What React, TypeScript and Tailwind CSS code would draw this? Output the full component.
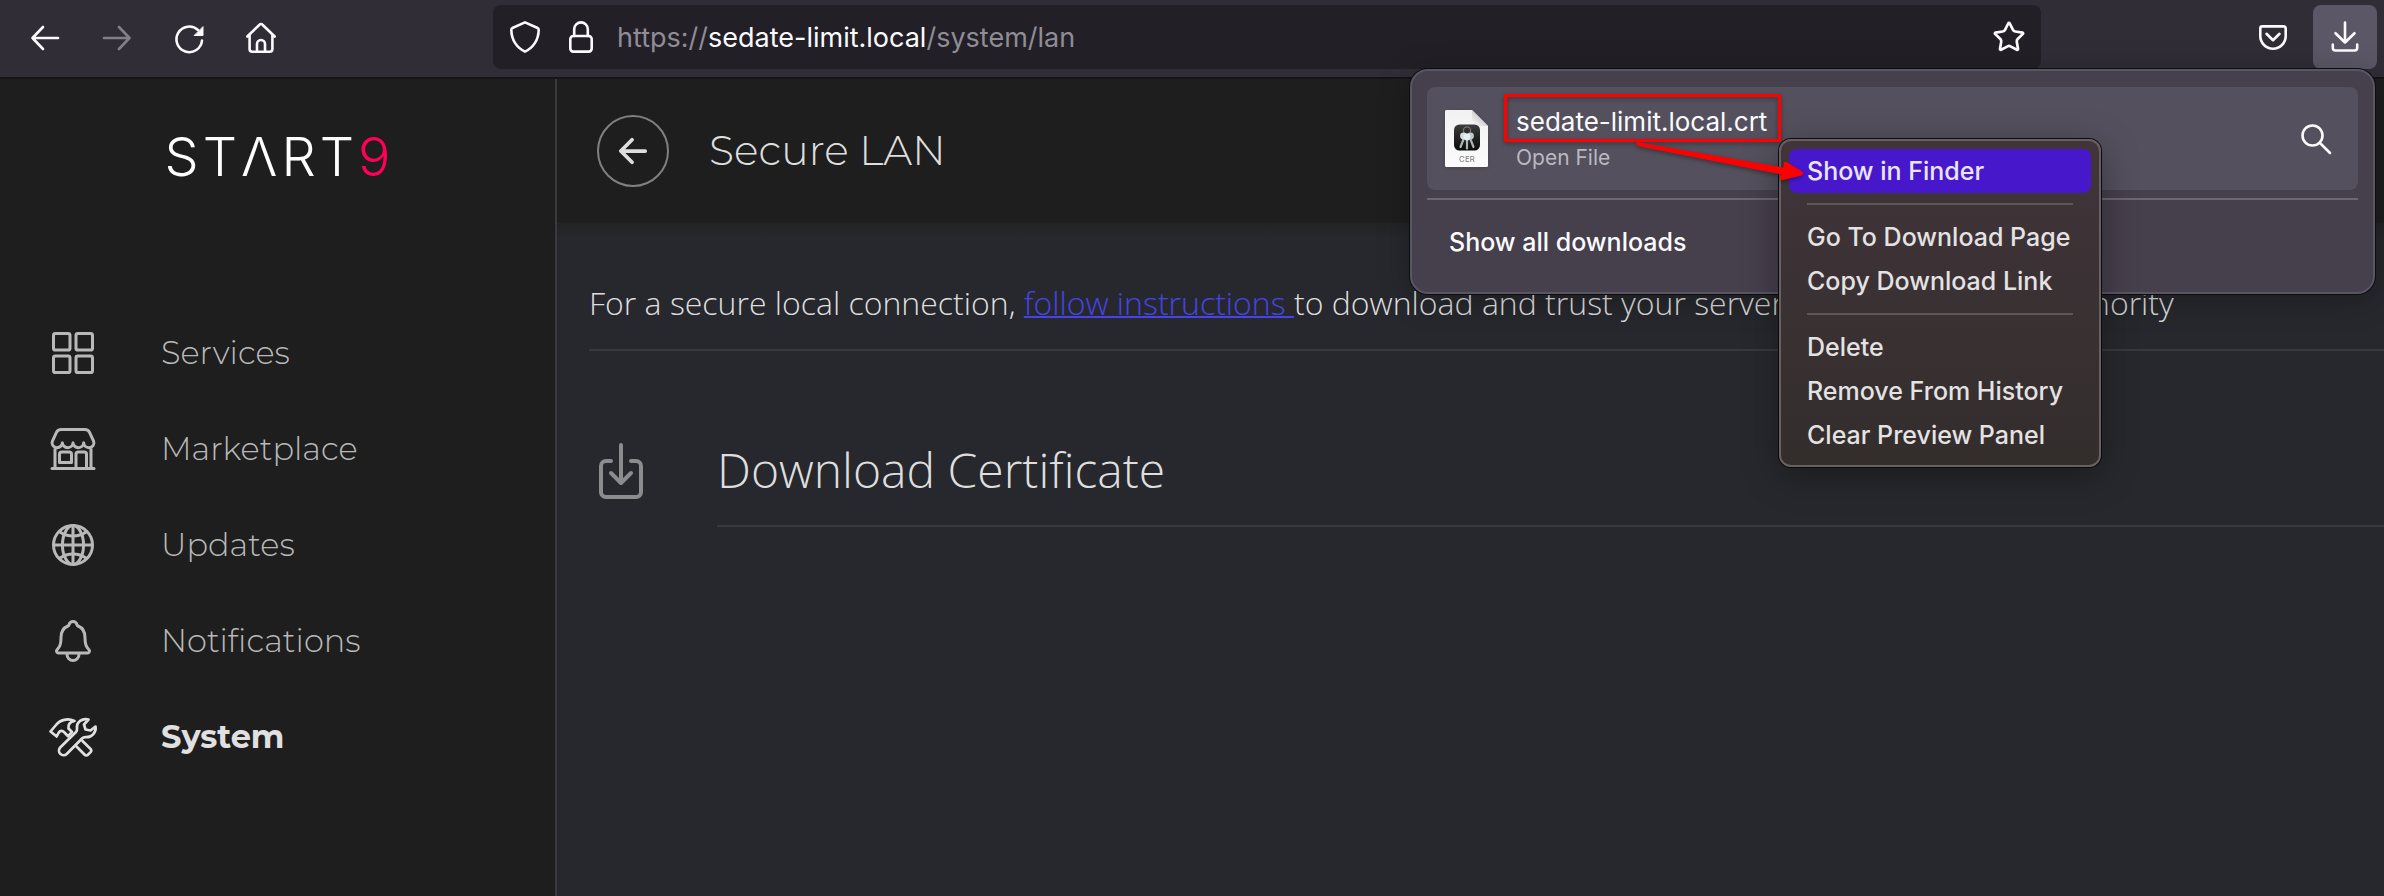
import { useState } from "react";
import type { ReactNode } from "react";
import {
  IoArrowBack,
  IoDownloadOutline,
  IoGlobeOutline,
  IoGridOutline,
  IoNotificationsOutline,
  IoStorefrontOutline,
} from "react-icons/io5";
import { Star } from "lucide-react";

function Glyph({ children }: { children: ReactNode }) {
  return (
    <svg
      viewBox="0 0 36 36"
      className="size-9"
      fill="none"
      stroke="currentColor"
      strokeWidth="2.6"
      strokeLinecap="round"
      strokeLinejoin="round"
      aria-hidden="true"
    >
      {children}
    </svg>
  );
}

function ToolButton({ label, className = "", children }: { label: string; className?: string; children: ReactNode }) {
  return (
    <button
      type="button"
      aria-label={label}
      className={`flex size-16 shrink-0 items-center justify-center rounded-lg text-[#fbfbfe] ${className}`}
    >
      {children}
    </button>
  );
}

function AddressBar() {
  const [url, setUrl] = useState("https://sedate-limit.local/system/lan");
  const parts = url.match(/^(\w+:\/\/)?([^/]*)(.*)$/) ?? ["", "", url, ""];
  return (
    <div className="mx-[200px] flex h-16 min-w-0 flex-1 items-center rounded-lg bg-[#221f26] px-1 text-[#fbfbfe]">
      <button type="button" aria-label="Tracking protection" className="flex h-16 w-14 items-center justify-center">
        <Glyph>
          <path d="M18 3.4 30.6 9c.7.3 1.1.9 1.1 1.7C31.6 21 26 29 18 32.6 10 29 4.4 21 4.3 10.7c0-.8.4-1.4 1.1-1.7z" />
        </Glyph>
      </button>
      <button type="button" aria-label="Site information" className="flex h-16 w-14 items-center justify-center">
        <Glyph>
          <rect x="7.3" y="17" width="21.4" height="15.6" rx="3" />
          <path d="M11.200 17v-6.800a6.800 6.800 0 0 1 13.600 0V17" />
        </Glyph>
      </button>
      <div className="relative ml-2 flex-1 pt-0.5 text-[27px] leading-9">
        <div aria-hidden="true" className="whitespace-pre text-[#8f8d95]">
          {parts[1]}
          <span className="text-[#fbfbfe]">{parts[2]}</span>
          {parts[3]}
        </div>
        <input
          aria-label="Address"
          value={url}
          onChange={(e) => setUrl(e.target.value)}
          className="absolute inset-0 w-full bg-transparent text-transparent caret-white outline-none"
        />
      </div>
      <button type="button" aria-label="Bookmark this page" className="flex h-16 w-14 items-center justify-center">
        <Star className="size-[34px]" strokeWidth={1.9} aria-hidden="true" />
      </button>
    </div>
  );
}

function FileIcon() {
  return (
    <svg viewBox="0 0 43 57" className="h-[57px] w-[43px] shrink-0 drop-shadow-sm" aria-hidden="true">
      <defs>
        <linearGradient id="sheet" x1="0" y1="0" x2="0" y2="1">
          <stop offset="0" stopColor="#f2f2f2" />
          <stop offset="1" stopColor="#fbfbfb" />
        </linearGradient>
        <linearGradient id="fold" x1="0" y1="1" x2="1" y2="0">
          <stop offset="0" stopColor="#fff" />
          <stop offset="0.5" stopColor="#d2d2d2" />
          <stop offset="1" stopColor="#eee" />
        </linearGradient>
        <linearGradient id="tile" x1="0" y1="0" x2="0" y2="1">
          <stop offset="0" stopColor="#3c3c3c" />
          <stop offset="1" stopColor="#0a0a0a" />
        </linearGradient>
      </defs>
      <path d="M1.500 0H27L43 16v39.500a1.500 1.500 0 0 1-1.500 1.500h-40A1.500 1.500 0 0 1 0 55.500v-54A1.500 1.500 0 0 1 1.500 0z" fill="url(#sheet)" />
      <path d="M27 0v14.500a1.500 1.500 0 0 0 1.500 1.500H43z" fill="url(#fold)" />
      <rect x="9" y="14.5" width="26" height="26" rx="5.5" fill="url(#tile)" />
      <circle cx="22" cy="20.5" r="3.6" fill="none" stroke="#77756a" strokeWidth="1.2" />
      <g stroke="#aab4b6" strokeWidth="2.2" strokeLinecap="round">
        <path d="M19 28 15.500 37M22 29v9.500M25 28l3.500 9" />
      </g>
      <circle cx="18.5" cy="26" r="3.4" fill="#d3e0e2" />
      <circle cx="25.5" cy="26" r="3.4" fill="#bccbce" />
      <circle cx="22" cy="27" r="3.4" fill="#e6efef" />
      <text x="22" y="51.5" textAnchor="middle" fontSize="8" fill="#777" className="font-['Inter',sans-serif]">
        CER
      </text>
    </svg>
  );
}

function MenuItem({ children, active = false }: { children: ReactNode; active?: boolean }) {
  return (
    <button
      type="button"
      role="menuitem"
      className={`block h-11 w-full rounded-lg px-[18px] text-left text-[25px] leading-[44px] font-medium whitespace-nowrap ${
        active ? "bg-[#4718cb] text-[#eae6fa]" : "text-[#e4e2e2]"
      }`}
    >
      {children}
    </button>
  );
}

function MenuRule() {
  return <hr className="mx-[18px] my-2.5 border-0 border-t-2 border-[#5d5756]" />;
}

function ContextMenu() {
  return (
    <div
      role="menu"
      className="absolute top-[68px] left-[367px] w-[322px] rounded-xl border-2 border-[#666060] bg-linear-to-b from-[#41353b] to-[#332d2c] p-2 shadow-[0_0_0_1px_#0c0b0d,0_8px_36px_rgba(0,0,0,0.35)]"
    >
      <MenuItem active>Show in Finder</MenuItem>
      <MenuRule />
      <MenuItem>Go To Download Page</MenuItem>
      <MenuItem>Copy Download Link</MenuItem>
      <MenuRule />
      <MenuItem>Delete</MenuItem>
      <MenuItem>Remove From History</MenuItem>
      <MenuItem>Clear Preview Panel</MenuItem>
    </div>
  );
}

function Callout() {
  return (
    <svg
      viewBox="0 0 310 100"
      className="pointer-events-none absolute top-[19px] left-[88px] h-[100px] w-[310px] drop-shadow-[0_2px_2px_rgba(0,0,0,0.35)]"
      aria-hidden="true"
    >
      <rect x="5.5" y="5.5" width="274" height="45" rx="0.5" fill="none" stroke="#ff0000" strokeWidth="3.2" />
      <path
        d="M137 52 283.500 77.500 283.500 73.500Q284 71 286.500 72L302 81.500Q304.500 84 301.500 85.500L282.500 90Q279.500 90.500 280 87.500L281.500 84.500 138 56Q135.500 54 137 52z"
        fill="#ff0000"
      />
    </svg>
  );
}

function DownloadsPanel() {
  return (
    <section
      aria-label="Downloads"
      className="absolute top-[69px] right-[9px] z-10 w-[965px] rounded-[18px] border-2 border-[#5a5565] bg-[#463f4c] px-[15px] pt-4 shadow-[0_0_0_1px_#0e0d10,0_6px_32px_rgba(0,0,0,0.28)]"
    >
      <div className="flex h-[103px] items-center rounded-lg bg-[#54505d] pr-6 pl-[18px]">
        <FileIcon />
        <div className="ml-7 flex-1">
          <div className="mb-1.5 text-[26px] leading-8 text-[#fbfbfe]">sedate-limit.local.crt</div>
          <div className="text-[21px] leading-7 text-[#bab8c0]">Open File</div>
        </div>
        <button type="button" aria-label="Show download" className="text-[#fbfbfe]">
          <Glyph>
            <circle cx="14.5" cy="14.5" r="10" />
            <path d="m22 22 10 10" />
          </Glyph>
        </button>
      </div>
      <hr className="mt-2 border-0 border-t-2 border-[#6c6675]" />
      <button type="button" className="mb-1.5 block h-[86px] px-[22px] text-[25px] font-medium text-[#fbfbfe]">
        Show all downloads
      </button>
      <ContextMenu />
      <Callout />
    </section>
  );
}

function Toolbar() {
  return (
    <header className="relative flex border-b-2 border-[#151418] bg-[#302d37] pt-[5px] pr-[7px] pb-2 pl-[13px]">
      <nav aria-label="Browser" className="flex gap-2">
        <ToolButton label="Back">
          <Glyph>
            <path d="M31 19H5.500M16 8 5.500 19 16 30" />
          </Glyph>
        </ToolButton>
        <ToolButton label="Forward" className="opacity-40">
          <Glyph>
            <path d="M5 19h25.500M20 8l10.500 11L20 30" />
          </Glyph>
        </ToolButton>
        <ToolButton label="Reload">
          <Glyph>
            <path d="M31 21.500A12.800 12.800 0 1 1 27 11" />
            <path d="M32 8v8.500h-8.500z" fill="currentColor" strokeWidth="1" />
          </Glyph>
        </ToolButton>
        <ToolButton label="Home">
          <Glyph>
            <path d="M4.300 17.500 16.500 5.700a2.100 2.100 0 0 1 3 0L31.700 17.500M6.600 15.500V30a2.700 2.700 0 0 0 2.700 2.700h17.400a2.700 2.700 0 0 0 2.700-2.700V15.500M14 32.500V25a4 4 0 0 1 8 0v7.500" />
          </Glyph>
        </ToolButton>
      </nav>
      <AddressBar />
      <div className="flex gap-2">
        <ToolButton label="Save to Pocket">
          <Glyph>
            <path d="M7.300 7.400h21.400a2 2 0 0 1 2 2V17a12.700 12.700 0 0 1-25.400 0V9.400a2 2 0 0 1 2-2z" />
            <path d="m11.500 14.800 6.500 6.400 6.500-6.400" />
          </Glyph>
        </ToolButton>
        <ToolButton label="Downloads" className="bg-[#5c5766]">
          <Glyph>
            <path d="M18 3.500V23M8.500 14.200 18 23.500l9.500-9.300M5.800 25.500v3.200a2.800 2.800 0 0 0 2.800 2.800h18.800a2.800 2.800 0 0 0 2.800-2.800v-3.200" />
          </Glyph>
        </ToolButton>
      </div>
      <DownloadsPanel />
    </header>
  );
}

function ToolsIcon() {
  return (
    <svg
      viewBox="9 4 48 48"
      className="size-12 overflow-visible"
      fill="none"
      stroke="currentColor"
      strokeWidth="2.7"
      strokeLinejoin="round"
      strokeLinecap="round"
      aria-hidden="true"
    >
      <path d="M10.500 22.500 16 16C20 10.500 28 9 34.500 12 29.500 12.800 28 16 28.500 19.500L32 23l-4 4.200-3.500-3.700c-2.500-2.500-4.500-2-6 .5l-1.800 3.500z" />
      <path d="m36.500 37.500 8.200 8.300a2.200 2.200 0 0 0 3.200 0l2.700-2.700a2.200 2.200 0 0 0 0-3.200L42.500 32" />
      <path d="M48.500 10.500C42 9 36.500 13 37 19c.2 2 0 3-1 4L20.200 38.500a4.600 4.600 0 0 0 6.500 6.500L42 29.500c1-1 2-1.500 4-1.300 6 .3 10.500-5.200 9.500-10.700L50.500 21.500 45.500 20.500 44 15.500z" />
    </svg>
  );
}

const navItems = [
  { label: "Services", icon: <IoGridOutline className="size-12" /> },
  { label: "Marketplace", icon: <IoStorefrontOutline className="size-12" /> },
  { label: "Updates", icon: <IoGlobeOutline className="size-12" /> },
  { label: "Notifications", icon: <IoNotificationsOutline className="size-12" /> },
  { label: "System", icon: <ToolsIcon />, current: true },
];

function Sidebar() {
  return (
    <aside className="w-[557px] shrink-0 border-r-2 border-[#3a3a3a] bg-[#1e1e1e]">
      <div
        aria-label="START9"
        className="mt-[46px] mb-[116px] flex h-16 items-center justify-center gap-1 text-[54px] leading-[64px] font-light text-white"
      >
        <span>S</span>
        <span>T</span>
        <span>Λ</span>
        <span>R</span>
        <span>T</span>
        <span className="text-[#ff0059]">9</span>
      </div>
      <nav aria-label="Main">
        {navItems.map((item) => (
          <a
            key={item.label}
            href="#"
            aria-current={item.current ? "page" : undefined}
            className={`flex h-24 items-center gap-16 pl-[49px] font-['Montserrat','Inter',sans-serif] text-[32px] ${
              item.current ? "font-bold text-[#e0e0e0]" : "font-light text-[#b9b9b9]"
            }`}
          >
            {item.icon}
            {item.label}
          </a>
        ))}
      </nav>
    </aside>
  );
}

function Content() {
  return (
    <main className="min-w-0 flex-1 bg-[#27282d] font-['Open_Sans',sans-serif] font-light text-[#dedede]">
      <div className="flex h-36 items-center gap-10 bg-[#1e1e1e] pl-10">
        <button
          type="button"
          aria-label="Back to System"
          className="flex size-[72px] items-center justify-center rounded-full border-2 border-[#808080]"
        >
          <IoArrowBack className="size-10" />
        </button>
        <h1 className="font-['Montserrat','Inter',sans-serif] text-[41px] font-light">Secure LAN</h1>
      </div>
      <div className="h-4 bg-linear-to-b from-[#222325] to-[#27282d]" />
      <div className="pl-8">
        <p className="border-b-2 border-[#39393b] pt-[42px] pb-6 text-[32px] leading-[44px] whitespace-nowrap">
          For a secure local connection,{" "}
          <a href="#" className="text-[#4644e8] underline decoration-2">
            follow instructions{" "}
          </a>
          to download and trust your server&apos;s Root Certificate Authority
        </p>
        <a href="#" className="mt-16 flex gap-16">
          <IoDownloadOutline className="mt-6 size-16 text-[#8c8c8e]" />
          <span className="flex h-28 flex-1 items-center border-b-2 border-[#39393b] text-5xl">
            Download Certificate
          </span>
        </a>
      </div>
    </main>
  );
}

export default function App() {
  return (
    <div className="flex min-h-screen flex-col overflow-hidden bg-[#1e1e1e] font-['Inter',sans-serif]">
      <Toolbar />
      <div className="flex flex-1">
        <Sidebar />
        <Content />
      </div>
    </div>
  );
}
